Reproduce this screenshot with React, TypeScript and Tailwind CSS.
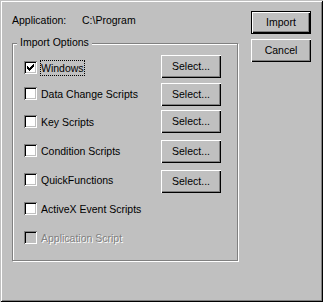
import React from "react";

type Row = {
  label: string;
  checked?: boolean;
  focus?: boolean;
  select?: boolean;
  disabled?: boolean;
  mt: string;
  cb: string;
};

const rows: Row[] = [
  { label: "Windows", checked: true, focus: true, select: true, mt: "mt-[11px]", cb: "mt-[6px]" },
  { label: "Data Change Scripts", select: true, mt: "mt-[5px]", cb: "mt-[4px]" },
  { label: "Key Scripts", select: true, mt: "mt-[4px]", cb: "mt-[5px]" },
  { label: "Condition Scripts", select: true, mt: "mt-[7px]", cb: "mt-[4px]" },
  { label: "QuickFunctions", select: true, mt: "mt-[7px]", cb: "mt-[3px]" },
  { label: "ActiveX Event Scripts", mt: "mt-[4px]", cb: "mt-[5px]" },
  { label: "Application Script", disabled: true, mt: "mt-[6px]", cb: "mt-[5px]" },
];

// classic 3-pixel-tall check columns
const checkCols = [5, 6, 7, 6, 5, 4, 3];

function Checkbox({ checked, disabled }: { checked?: boolean; disabled?: boolean }) {
  return (
    <div
      className={
        "relative w-[13px] h-[13px] shrink-0 shadow-[inset_1px_1px_0_#808080,inset_-1px_-1px_0_#fff,inset_2px_2px_0_#000,inset_-2px_-2px_0_#c0c0c0] " +
        (disabled ? "bg-[#c0c0c0]" : "bg-white")
      }
    >
      {checked && (
        <svg className="absolute inset-0" width="13" height="13" viewBox="0 0 13 13" shapeRendering="crispEdges">
          {checkCols.map((y, i) => (
            <rect key={i} x={3 + i} y={y} width="1" height="3" fill="#000" />
          ))}
        </svg>
      )}
    </div>
  );
}

function Button({ children, isDefault }: { children: React.ReactNode; isDefault?: boolean }) {
  return (
    <div
      className={
        "flex items-center justify-center w-[60px] h-[23px] bg-[#c0c0c0] text-black " +
        (isDefault
          ? "border border-black shadow-[inset_1px_1px_0_#fff,inset_-1px_-1px_0_#000,inset_-2px_-2px_0_#808080]"
          : "shadow-[inset_1px_1px_0_#fff,inset_-1px_-1px_0_#000,inset_-2px_-2px_0_#808080]")
      }
    >
      {children}
    </div>
  );
}

export default function App() {
  return (
    <div
      className="w-[323px] h-[302px] bg-[#c0c0c0] flex pl-[12px] pt-[11px] text-[10.5px] leading-[13px] text-black shadow-[inset_1px_1px_0_#c0c0c0,inset_-1px_-1px_0_#000,inset_2px_2px_0_#fff,inset_-2px_-2px_0_#808080]"
      style={{ fontFamily: '"Liberation Sans", Arial, sans-serif' }}
    >
      {/* left column */}
      <div className="w-[226px] flex flex-col">
        <div className="h-[18px] flex items-center">
          <span className="w-[70px]">Application:</span>
          <span>C:\Program</span>
        </div>

        <div className="relative mt-[14px] h-[218px] border border-[#808080] shadow-[1px_1px_0_#fff,inset_1px_1px_0_#fff] flex flex-col pl-[11px]">
          <span className="absolute left-[4px] top-[-8px] bg-[#c0c0c0] px-[3px]">Import Options</span>

          {rows.map((r) => (
            <div key={r.label} className={"flex items-start h-[23px] " + r.mt}>
              <div className={"flex items-center h-[13px] w-[137px] " + r.cb}>
                <Checkbox checked={r.checked} disabled={r.disabled} />
                <span
                  className={
                    "ml-[3px] px-[0px] border border-dotted leading-[14px] whitespace-nowrap " +
                    (r.focus ? "border-black" : "border-transparent") +
                    (r.disabled ? " text-[#808080] [text-shadow:1px_1px_0_#fff]" : "")
                  }
                >
                  {r.label}
                </span>
              </div>
              {r.select && <Button>Select...</Button>}
            </div>
          ))}
        </div>
      </div>

      {/* right column */}
      <div className="ml-[13px] flex flex-col gap-[5px]">
        <Button isDefault>Import</Button>
        <Button>Cancel</Button>
      </div>
    </div>
  );
}
